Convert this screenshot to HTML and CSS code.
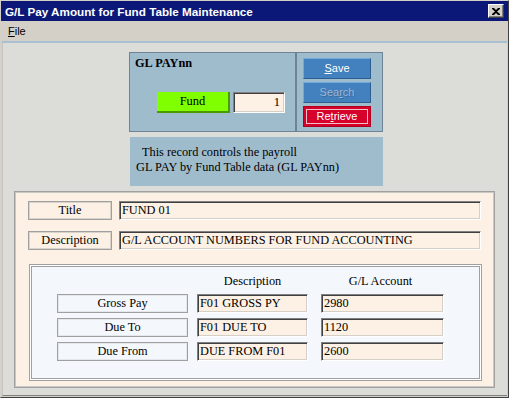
FILE: index.html
```html
<!DOCTYPE html>
<html lang="en">
<head>
    <meta charset="UTF-8">
    <title>G/L Pay Amount for Fund Table Maintenance</title>
    <link rel="stylesheet" href="styles.css">
</head>
<body>
    <div class="window">
        <div class="titlebar">
            <span class="title">G/L Pay Amount for Fund Table Maintenance</span>
            <span class="close-btn">
                <svg width="8" height="7" viewBox="0 0 8 7"><path d="M0 0h2l2 2 2-2h2v1L5 3.5 8 6v1H6L4 5 2 7H0V6l3-2.5L0 1z" fill="#000"/></svg>
            </span>
        </div>
        <div class="menubar">
            <span class="menu-item"><u>F</u>ile</span>
        </div>
        <div class="client">
            <div class="key-panel">
                <div class="key-left">
                    <div class="key-title">GL PAYnn</div>
                    <div class="key-row">
                        <div class="fund-btn">Fund</div>
                        <div class="field field-num">1</div>
                    </div>
                </div>
                <div class="key-actions">
                    <div class="btn btn-blue"><u>S</u>ave</div>
                    <div class="btn btn-blue btn-disabled">Sea<u>r</u>ch</div>
                    <div class="btn btn-red"><span>Re<u>t</u>rieve</span></div>
                </div>
            </div>
            <div class="info">
                <div class="info-line1">This record controls the payroll</div>
                <div>GL PAY by Fund Table data (GL PAYnn)</div>
            </div>
            <div class="main-panel">
                <div class="form-row">
                    <div class="label">Title</div>
                    <div class="field field-wide">FUND 01</div>
                </div>
                <div class="form-row">
                    <div class="label">Description</div>
                    <div class="field field-wide">G/L ACCOUNT NUMBERS FOR FUND ACCOUNTING</div>
                </div>
                <div class="accounts">
                    <div></div>
                    <div class="col-head">Description</div>
                    <div class="col-head">G/L Account</div>

                    <div class="label label-blue">Gross Pay</div>
                    <div class="field">F01 GROSS PY</div>
                    <div class="field">2980</div>

                    <div class="label label-blue">Due To</div>
                    <div class="field">F01 DUE TO</div>
                    <div class="field">1120</div>

                    <div class="label label-blue">Due From</div>
                    <div class="field">DUE FROM F01</div>
                    <div class="field">2600</div>
                </div>
            </div>
        </div>
    </div>
</body>
</html>
```

FILE: styles.css
```css
body {
    margin: 0;
    background: #d4d0c8;
    font-family: "Liberation Serif", "Times New Roman", serif;
    font-size: 12.3px;
    color: #000;
}
.window {
    width: 509px;
    height: 398px;
    box-sizing: border-box;
    border: 1px solid;
    border-color: #d4d0c8 #404040 #404040 #d4d0c8;
    background: #d4d0c8;
    display: flex;
    flex-direction: column;
}
.titlebar {
    height: 20px;
    background: #0b1878;
    display: flex;
    align-items: center;
    justify-content: space-between;
    padding: 0 4px 0 4px;
}
.title {
    color: #fff;
    font-family: "Liberation Sans", Arial, sans-serif;
    font-weight: bold;
    font-size: 11.7px;
}
.close-btn {
    width: 16px;
    height: 14px;
    box-sizing: border-box;
    background: #d4d0c8;
    border: 1px solid;
    border-color: #fff #404040 #404040 #fff;
    box-shadow: inset -1px -1px #808080;
    display: flex;
    align-items: center;
    justify-content: center;
}
.menubar {
    height: 20px;
    margin: 0 1px;
    display: flex;
    align-items: center;
    border-bottom: 2px solid #a9c0d2;
}
.menu-item {
    font-family: "Liberation Sans", Arial, sans-serif;
    font-size: 11px;
    padding-left: 6px;
}
.client {
    flex: 1;
    margin: 0 1px 1px 1px;
    background: #dcdcd8;
    border-left: 1px solid #c4c4c0;
    border-bottom: 1px solid #808080;
    display: flex;
    flex-direction: column;
    padding-top: 9px;
}
.key-panel {
    width: 254px;
    height: 80px;
    box-sizing: border-box;
    margin-left: 126px;
    border: 1px solid #6f8394;
    background: #9fbccd;
    display: flex;
}
.key-left {
    width: 165px;
    border-right: 2px solid #6f8394;
    display: flex;
    flex-direction: column;
}
.key-title {
    font-weight: bold;
    line-height: 15px;
    padding: 3px 0 0 5px;
}
.key-row {
    display: flex;
    gap: 3px;
    margin: 21px 0 0 27px;
}
.fund-btn {
    width: 73px;
    height: 21px;
    box-sizing: border-box;
    background: #80ff00;
    border-right: 2px solid #4d9a00;
    border-bottom: 2px solid #4d9a00;
    text-align: center;
    line-height: 19px;
    font-size: 12.5px;
}
.field {
    height: 19px;
    box-sizing: border-box;
    background: #fcf1e4;
    border: 1px solid;
    border-color: #808080 #fff #fff #808080;
    box-shadow: inset 1px 1px #404040, inset -1px -1px #d4d0c8;
    padding: 0 2px;
    line-height: 17px;
    white-space: nowrap;
    overflow: hidden;
}
.field-num {
    width: 52px;
    height: 21px;
    line-height: 19px;
    text-align: right;
    padding-right: 4px;
    font-size: 12.5px;
}
.key-actions {
    flex: 1;
    display: flex;
    flex-direction: column;
    gap: 3px;
    padding: 5px 0 0 6px;
}
.btn {
    width: 68px;
    height: 21px;
    box-sizing: border-box;
    font-family: "Liberation Sans", Arial, sans-serif;
    font-size: 11px;
    color: #fff;
    text-align: center;
    line-height: 19px;
}
.btn-blue {
    background: #4380be;
    border: 1px solid;
    border-color: #72a8de #2c5e92 #2c5e92 #72a8de;
}
.btn-disabled {
    color: #9ab6d6;
    text-shadow: 1px 1px 0 #3a6c9e;
}
.btn-red {
    background: #d6002a;
    border: 1px solid #b00020;
    padding: 2px;
}
.btn-red span {
    display: block;
    height: 100%;
    box-sizing: border-box;
    border: 1px solid #f4c0c8;
    line-height: 13px;
}
.info {
    width: 253px;
    height: 49px;
    box-sizing: border-box;
    margin: 5px 0 0 127px;
    background: #9fbccd;
    padding: 8px 0 0 6px;
    line-height: 15px;
}
.info-line1 {
    padding-left: 6px;
}
.main-panel {
    width: 481px;
    height: 197px;
    box-sizing: border-box;
    margin: 5px 0 0 11px;
    background: #fcf1e4;
    border: 1px solid #a0a0a0;
    box-shadow: inset 0 0 0 1px #c8c8c4;
    padding: 9px 13px 0 13px;
    display: flex;
    flex-direction: column;
    gap: 11px;
}
.form-row {
    display: flex;
    gap: 7px;
}
.label {
    width: 84px;
    height: 19px;
    box-sizing: border-box;
    border: 1px solid #a0a0a0;
    box-shadow: inset 0 0 0 1px #d8d4cc;
    text-align: center;
    line-height: 17px;
}
.field-wide {
    flex: 1;
}
.accounts {
    margin: 3px 0 0 1px;
    width: 453px;
    height: 117px;
    box-sizing: border-box;
    background: #f4f8fc;
    border: 1px solid #a0a0a0;
    box-shadow: inset 0 0 0 1px #fff, inset 0 0 0 2px #a0a0a0;
    padding: 8px 0 0 27px;
    display: grid;
    grid-template-columns: 131px 111px 127px;
    grid-template-rows: 16px 19px 19px 19px;
    column-gap: 9px;
    row-gap: 5px;
    align-content: start;
}
.accounts .field:nth-child(3n) {
    margin-left: 4px;
}
.col-head {
    text-align: center;
    line-height: 16px;
}
.label-blue {
    width: auto;
    box-shadow: inset 0 0 0 1px #e4e8ec;
}
```
